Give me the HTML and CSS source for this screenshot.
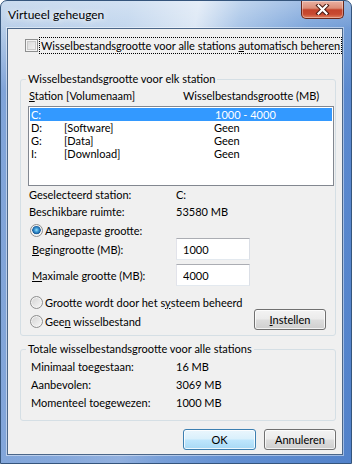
FILE: index.html
```html
<!DOCTYPE html>
<html>
    <head>
        <meta charset="utf-8">
        <title>Virtueel geheugen</title>
        <link rel="stylesheet" href="styles.css">
    </head>
    <body>
        <div class="window">
            <div class="titlebar">
                <span class="title">Virtueel geheugen</span>
                <div class="close">
                    <svg width="15" height="11" viewBox="0 0 15 11">
                        <path d="M3.5 1.5 L11.5 9.5 M11.5 1.5 L3.5 9.5" stroke="#4b1a12" stroke-width="4.2" stroke-linecap="square" fill="none"/>
                        <path d="M3.5 1.5 L11.5 9.5 M11.5 1.5 L3.5 9.5" stroke="#fff" stroke-width="2.2" stroke-linecap="square" fill="none"/>
                    </svg>
                </div>
            </div>

            <div class="client">
                <div class="auto-row">
                    <span class="check"></span>
                    <span class="focus">Wisselbestandsgrootte voor alle stations <u>a</u>utomatisch beheren</span>
                </div>

                <fieldset class="group drives">
                    <legend>Wisselbestandsgrootte voor elk station</legend>
                    <div class="list-head">
                        <span><u>S</u>tation [Volumenaam]</span>
                        <span>Wisselbestandsgrootte (MB)</span>
                    </div>
                    <div class="listbox">
                        <div class="row selected"><span>C:</span><span></span><span class="size">1000 - 4000</span></div>
                        <div class="row"><span>D:</span><span>[Software]</span><span>Geen</span></div>
                        <div class="row"><span>G:</span><span>[Data]</span><span>Geen</span></div>
                        <div class="row"><span>I:</span><span>[Download]</span><span>Geen</span></div>
                    </div>

                    <div class="info first"><span>Geselecteerd station:</span><span>C:</span></div>
                    <div class="info"><span>Beschikbare ruimte:</span><span>53580 MB</span></div>

                    <div class="radio-row custom"><span class="radio on"></span><span>Aangepaste <u>g</u>rootte:</span></div>
                    <div class="field first"><label for="start"><u>B</u>egingrootte (MB):</label><input id="start" type="text" value="1000"></div>
                    <div class="field"><label for="max"><u>M</u>aximale grootte (MB):</label><input id="max" type="text" value="4000"></div>

                    <div class="radio-row system"><span class="radio"></span><span>Grootte wordt door het s<u>y</u>steem beheerd</span></div>
                    <div class="none-row">
                        <div class="radio-row"><span class="radio"></span><span>Gee<u>n</u> wisselbestand</span></div>
                        <button class="btn set"><u>I</u>nstellen</button>
                    </div>
                </fieldset>

                <fieldset class="group totals">
                    <legend>Totale wisselbestandsgrootte voor alle stations</legend>
                    <div class="total"><span>Minimaal toegestaan:</span><span>16 MB</span></div>
                    <div class="total"><span>Aanbevolen:</span><span>3069 MB</span></div>
                    <div class="total"><span>Momenteel toegewezen:</span><span>1000 MB</span></div>
                </fieldset>

                <div class="buttons">
                    <button class="btn default">OK</button>
                    <button class="btn">Annuleren</button>
                </div>
            </div>
        </div>
    </body>
</html>
```

FILE: styles.css
```css
*{
    box-sizing:border-box;
}
body{
    margin:0;
    font:11px "Lato", "Liberation Sans", sans-serif;
    color:#000;
    white-space:nowrap;
}
u{
    text-decoration-thickness:1px;
    text-underline-offset:1px;
}

/* window frame */
.window{
    width:352px;
    height:464px;
    border:1px solid #35557c;
    border-radius:7px 7px 0 0;
    display:flex;
    flex-direction:column;
    background:
        linear-gradient(to bottom, rgba(255,255,255,0.25) 0, rgba(255,255,255,0) 28px),
        linear-gradient(to bottom, rgba(70,120,200,0) 24px, rgba(70,120,200,0.5) 90px),
        linear-gradient(100deg, #b9cfe9 0%, #c3d7ee 30%, #dde8f5 46%, #aac6e8 56%, #7ea6db 72%, #5d8bcc 100%);
}
.titlebar{
    height:27px;
    display:flex;
    justify-content:space-between;
    align-items:flex-start;
}
.title{
    margin:7px 0 0 7px;
    line-height:14px;
    font-size:12px;
    text-shadow:0 0 6px #fff, 0 0 10px rgba(255,255,255,0.8);
}
.close{
    width:43px;
    height:18px;
    margin-right:7px;
    border:1px solid #6b2619;
    border-top:none;
    border-radius:0 0 5px 5px;
    background:linear-gradient(#eab0a2 0%, #dc8d78 42%, #c4432b 52%, #c84a31 78%, #e0815f 100%);
    box-shadow:inset 0 0 0 1px rgba(255,255,255,0.35);
    display:flex;
    align-items:center;
    justify-content:center;
}
.client{
    flex:1;
    margin:0 8px 8px 6px;
    border:1px solid #4b6688;
    box-shadow:0 0 0 1px rgba(255,255,255,0.45);
    background:#f0f0f0;
    padding:8px 6px 0 12px;
}

/* automatic checkbox */
.auto-row{
    display:flex;
    align-items:center;
    height:17px;
    margin-left:5px;
}
.check{
    flex-shrink:0;
    width:13px;
    height:13px;
    border:1px solid #8e8f8f;
    background:linear-gradient(135deg, #d6d6d6, #f7f7f7);
    box-shadow:inset 0 0 0 1px #f4f4f4, inset 0 0 0 2px #c9c9c9;
}
.focus{
    margin-left:1px;
    height:17px;
    line-height:15px;
    padding:0 1px;
    border:1px dotted #000;
}

/* group boxes */
.group{
    margin:18px 0 0;
    min-width:0;
    border:1px solid #d5dfe5;
    border-radius:3px;
    padding:0 0 5px 7px;
}
.group legend{
    padding:0 2px;
    margin-left:-2px;
    line-height:14px;
}
.list-head{
    margin-top:3px;
    height:14px;
    line-height:14px;
    padding-left:1px;
    display:grid;
    grid-template-columns:154px auto;
}
.listbox{
    margin-top:3px;
    width:306px;
    height:80px;
    border:1px solid #828790;
    padding:1px;
    background:#fff;
}
.row{
    height:13px;
    line-height:13px;
    padding-left:1px;
    display:grid;
    grid-template-columns:33px 150px auto;
}
.row.selected{
    background:#3399ff;
    color:#fff;
}
.row .size{
    padding-left:1px;
}
.info{
    margin-top:3px;
    height:14px;
    line-height:14px;
    padding-left:1px;
    display:grid;
    grid-template-columns:147px auto;
}
.info.first{
    margin-top:2px;
}
.radio-row{
    display:flex;
    align-items:center;
    height:14px;
    padding-left:2px;
}
.radio-row.custom{
    margin-top:4px;
}
.radio-row.system{
    margin-top:9px;
}
.radio{
    flex-shrink:0;
    width:13px;
    height:13px;
    margin-right:2px;
    border:1px solid #8e8f8f;
    border-radius:50%;
    background:linear-gradient(135deg, #d2d2d2, #f8f8f8);
    box-shadow:inset 0 0 0 1px #f4f4f4;
}
.radio.on{
    background:radial-gradient(circle at 50% 45%, #9be2fb 0, #3d9ad6 2px, #175a98 4px, #e8e8e8 4.6px, #f4f4f4 6px);
}
.field{
    display:flex;
    align-items:center;
    height:22px;
    margin-top:4px;
}
.field.first{
    margin-top:1px;
}
.field label{
    width:148px;
    padding-left:4px;
}
.field input{
    width:74px;
    height:22px;
    margin:0;
    padding:0 0 0 6px;
    font:inherit;
    color:#000;
    border:1px solid;
    border-color:#abadb3 #dbdfe6 #e3e9ef #e2e3ea;
    background:#fff;
    outline:none;
}
.none-row{
    display:flex;
    align-items:center;
    height:21px;
}
.none-row .radio-row{
    margin-top:3px;
}

/* buttons */
.btn{
    height:21px;
    width:72px;
    padding:0;
    font:inherit;
    color:#000;
    border:1px solid #707070;
    border-radius:3px;
    background:linear-gradient(#f3f3f3 0%, #ebebeb 48%, #dddddd 52%, #cfcfcf 100%);
    box-shadow:inset 0 0 0 1px rgba(255,255,255,0.75);
}
.btn.set{
    margin-left:auto;
    margin-right:9px;
}
.btn.default{
    width:73px;
    border-color:#3c7fb1;
    background:linear-gradient(#eaf6fd 0%, #d9f0fc 48%, #bee6fd 52%, #a7d9f5 100%);
    box-shadow:inset 0 0 0 1px rgba(255,255,255,0.8);
}

/* totals */
.group.totals{
    margin-top:6px;
    padding-bottom:10px;
}
.total{
    margin-top:4px;
    height:14px;
    line-height:14px;
    padding-left:3px;
    display:grid;
    grid-template-columns:145px auto;
}
.buttons{
    margin-top:8px;
    display:flex;
    justify-content:flex-end;
    gap:8px;
}
```
